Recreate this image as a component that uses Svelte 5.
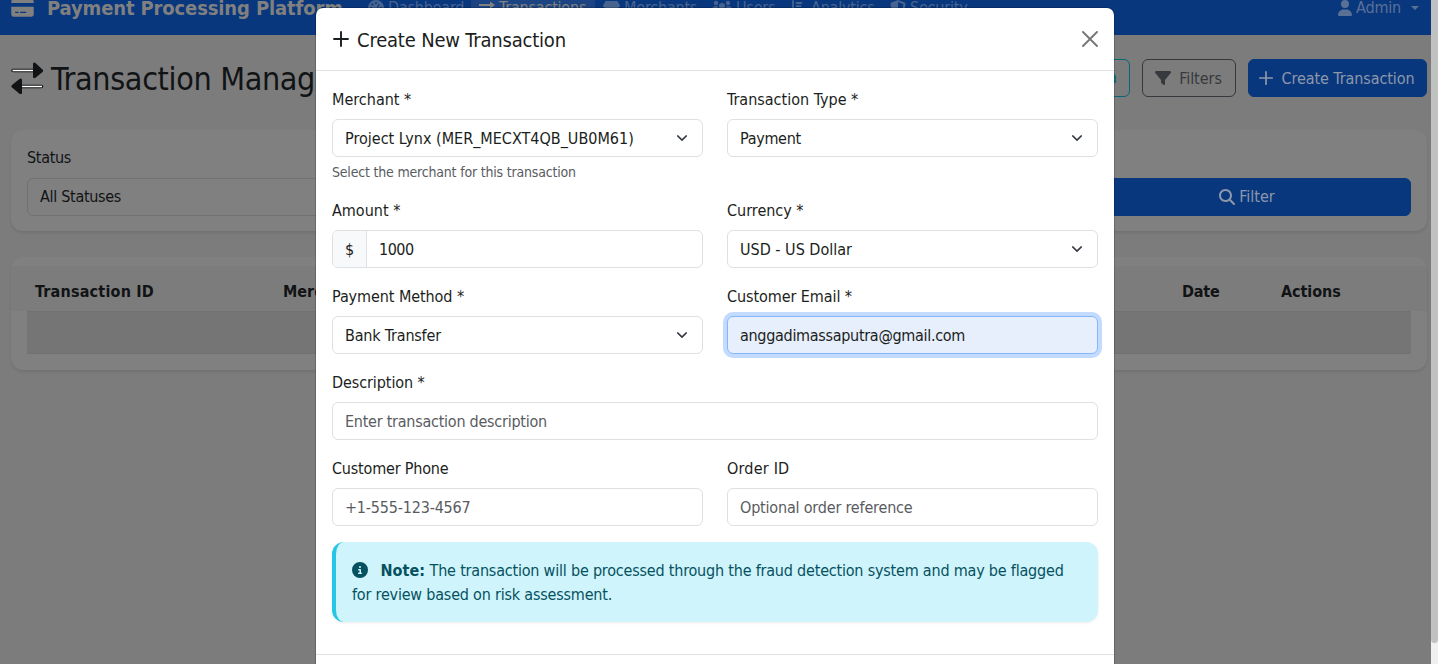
<script>
  const nav = [
    { label: 'Dashboard', icon: 'gauge' },
    { label: 'Transactions', icon: 'exchange', active: true },
    { label: 'Merchants', icon: 'store' },
    { label: 'Users', icon: 'users' },
    { label: 'Analytics', icon: 'chart' },
    { label: 'Security', icon: 'shield' }
  ];
</script>

{#snippet icon(name)}
  {#if name === 'gauge'}
    <svg width="16" height="16" viewBox="0 0 16 16"><path fill="currentColor" fill-rule="evenodd" d="M8 0a8 8 0 1 0 0 16A8 8 0 0 0 8 0zM8 2a1 1 0 1 1 0 2 1 1 0 0 1 0-2zM4.500 3.500a1 1 0 1 1 0 2 1 1 0 0 1 0-2zM3 7a1 1 0 1 1 0 2 1 1 0 0 1 0-2zM13 7a1 1 0 1 1 0 2 1 1 0 0 1 0-2zM10.500 4l1 .5-2 5.300A2 2 0 1 1 8.300 9.300z" /></svg>
  {:else if name === 'exchange'}
    <svg width="16" height="16" viewBox="0 0 16 16"><path fill="currentColor" d="M0 4h11V1.500L16 5l-5 3.500V6H0zM16 10H5V7.500L0 11l5 3.500V12h11z" /></svg>
  {:else if name === 'store'}
    <svg width="17" height="16" viewBox="0 0 17 16"><path fill="currentColor" d="M2.500 1h12L17 5.500C17 7 15.500 8 14 8H3C1.500 8 0 7 0 5.500zM1.500 9h2v2.500h10V9h2v5q0 1.500-1.500 1.500H3q-1.500 0-1.500-1.500z" /></svg>
  {:else if name === 'users'}
    <svg width="20" height="16" viewBox="0 0 20 16"><g fill="currentColor"><circle cx="4" cy="3" r="2.200" /><circle cx="16" cy="3" r="2.200" /><circle cx="10" cy="6" r="3" /><path d="M0 9.500C0 7.500 1.500 6.200 3 6.200h2.500C6 8 6.500 9 7.500 9.500zM20 9.500c0-2-1.500-3.300-3-3.300h-2.500c-.5 1.800-1 2.800-2 3.300zM4 15c0-3 2-4.500 4-4.500h4c2 0 4 1.500 4 4.500z" /></g></svg>
  {:else if name === 'chart'}
    <svg width="16" height="16" viewBox="0 0 16 16"><path fill="none" stroke="currentColor" stroke-width="1.800" stroke-linecap="round" d="M2 1v12h12M5.500 3h5M5.500 6.200h4M5.500 9.500h6.500" /></svg>
  {:else if name === 'shield'}
    <svg width="16" height="16" viewBox="0 0 16 16"><path fill="currentColor" fill-rule="evenodd" d="M8 0l6.500 2.500c.8.300 1 .8 1 1.500C15 10 12.500 14 8 16 3.500 14 1 10 .5 4c0-.7.200-1.200 1-1.500zM8 2v11.800c3.200-1.700 5-4.800 5.400-9.600z" /></svg>
  {/if}
{/snippet}

{#snippet plusIcon(size)}
  <svg width={size} height={size} viewBox="0 0 16 16"><path fill="none" stroke="currentColor" stroke-width="1.700" stroke-linecap="round" d="M8 1.800v12.400M1.800 8h12.400" /></svg>
{/snippet}

{#snippet chevron()}
  <svg width="16" height="12" viewBox="0 0 16 12"><path fill="none" stroke="#343a40" stroke-linecap="round" stroke-linejoin="round" stroke-width="1.500" d="m3.700 3.900 4.300 4.200 4.300-4.200" /></svg>
{/snippet}

<div class="screen">
  <div class="page">
    <header>
      <div class="bar">
        <div class="brand">
          <svg width="23" height="20" viewBox="0 0 576 512"><path fill="currentColor" d="M64 32C28.700 32 0 60.700 0 96v32H576V96c0-35.300-28.700-64-64-64H64zM576 224H0V416c0 35.300 28.700 64 64 64H512c35.300 0 64-28.700 64-64V224zM112 352h64c8.800 0 16 7.200 16 16s-7.200 16-16 16H112c-8.800 0-16-7.200-16-16s7.200-16 16-16zm112 16c0-8.800 7.200-16 16-16H368c8.800 0 16 7.200 16 16s-7.200 16-16 16H240c-8.800 0-16-7.200-16-16z" /></svg>
          <span>Payment Processing Platform</span>
        </div>
        <nav>
          {#each nav as item}
            <div class="link" class:active={item.active}>{@render icon(item.icon)}<span>{item.label}</span></div>
          {/each}
        </nav>
        <div class="admin">
          <svg width="14" height="16" viewBox="0 0 448 512"><path fill="currentColor" d="M224 256A128 128 0 1 0 224 0a128 128 0 1 0 0 256zm-45.700 48C79.800 304 0 383.800 0 482.300C0 498.700 13.300 512 29.700 512H418.300c16.400 0 29.700-13.300 29.700-29.700C448 383.800 368.200 304 269.700 304H178.300z" /></svg>
          <span class="s2">Admin</span>
          <i class="caret"></i>
        </div>
      </div>
    </header>

    <div class="heading">
      <svg width="33" height="32" viewBox="0 0 33 32">
        <path fill="#111315" d="M22 1.500q1-1.500 2.500-.5l7 6.500q1.300 1.300 0 2.600L24.500 15.800q-1.500 1-2.500-.5zM11 17.500q-1-1.500-2.500-.5L1 23q-1.300 1.300 0 2.600l7.500 6.200q1.500 1 2.500-.5z" />
        <path fill="none" stroke="#111315" stroke-width="3.600" stroke-linecap="round" d="M2 8.500h20M10 24.500h20.500" />
        <path stroke="#fff" stroke-width="1.600" d="M1.500 8.500H22M11 24.500h20" />
      </svg>
      <h1>Transaction Management</h1>
      <div class="actions">
        <div class="btn info">Refresh Data</div>
        <div class="btn outline">
          <svg width="16" height="16" viewBox="0 0 512 512"><path fill="currentColor" d="M3.900 54.900C10.500 40.900 24.500 32 40 32H472c15.500 0 29.500 8.900 36.100 22.900s4.600 30.500-5.200 42.500L320 320.900V448c0 12.100-6.800 23.200-17.700 28.600s-23.800 4.300-33.500-3l-64-48c-8.100-6-12.800-15.500-12.800-25.600V320.900L9 97.300C-.7 85.400-2.800 68.800 3.900 54.900z" /></svg>
          <span>Filters</span>
        </div>
        <div class="btn primary create">{@render plusIcon(16)}<span class="s1">Create Transaction</span></div>
      </div>
    </div>

    <section class="card filters">
      <div class="status">
        <div class="lab s3">Status</div>
        <div class="dimselect s3">All Statuses</div>
      </div>
      <div class="btn primary search">
        <svg width="16" height="16" viewBox="0 0 512 512"><path fill="currentColor" d="M416 208c0 45.900-14.900 88.300-40 122.700L502.600 457.400c12.500 12.500 12.500 32.800 0 45.300s-32.800 12.500-45.300 0L330.700 376C296.300 401.100 253.900 416 208 416 93.100 416 0 322.900 0 208S93.100 0 208 0 416 93.100 416 208zM208 352a144 144 0 1 0 0-288 144 144 0 1 0 0 288z" /></svg>
        <span>Filter</span>
      </div>
    </section>

    <section class="card table">
      <div class="thead"><b class="wide">Transaction ID</b><b>Merchant</b><b class="s2">Date</b><b class="s1">Actions</b></div>
      <div class="row"></div>
    </section>
  </div>

  <div class="scroll"><div class="thumb"></div></div>

  <div class="modal">
    <div class="mhead">
      {@render plusIcon(18)}
      <h5 class="s2">Create New Transaction</h5>
      <svg class="close" width="16" height="16" viewBox="0 0 16 16"><path fill="none" stroke="#777" stroke-width="1.900" stroke-linecap="round" d="M1 1l14 14M15 1L1 15" /></svg>
    </div>
    <div class="mbody">
      <div class="cols">
        <div class="field">
          <div class="label">Merchant *</div>
          <div class="input"><span>Project Lynx (MER_MECXT4QB_UB0M61)</span>{@render chevron()}</div>
          <div class="hint s2">Select the merchant for this transaction</div>
        </div>
        <div class="field">
          <div class="label">Transaction Type *</div>
          <div class="input"><span class="s3">Payment</span>{@render chevron()}</div>
        </div>
      </div>
      <div class="cols">
        <div class="field">
          <div class="label">Amount *</div>
          <div class="input group"><div class="addon">$</div><span class="s4">1000</span></div>
        </div>
        <div class="field">
          <div class="label">Currency *</div>
          <div class="input"><span>USD - US Dollar</span>{@render chevron()}</div>
        </div>
      </div>
      <div class="cols">
        <div class="field">
          <div class="label s1">Payment Method *</div>
          <div class="input"><span class="s2">Bank Transfer</span>{@render chevron()}</div>
        </div>
        <div class="field">
          <div class="label s1">Customer Email *</div>
          <div class="input focus"><span class="s3">anggadimassaputra@gmail.com</span></div>
        </div>
      </div>
      <div class="field">
        <div class="label s1">Description *</div>
        <div class="input ph"><span class="s25">Enter transaction description</span></div>
      </div>
      <div class="cols">
        <div class="field">
          <div class="label s2">Customer Phone</div>
          <div class="input ph"><span class="s2">+1-555-123-4567</span></div>
        </div>
        <div class="field">
          <div class="label wide">Order ID</div>
          <div class="input ph"><span class="s2">Optional order reference</span></div>
        </div>
      </div>
      <div class="note">
        <svg width="16" height="16" viewBox="0 0 512 512"><path fill="currentColor" d="M256 512A256 256 0 1 0 256 0a256 256 0 1 0 0 512zM216 336h24V272H216c-13.300 0-24-10.700-24-24s10.700-24 24-24h48c13.300 0 24 10.700 24 24v88h8c13.300 0 24 10.700 24 24s-10.700 24-24 24H216c-13.300 0-24-10.700-24-24s10.700-24 24-24zm40-208a32 32 0 1 1 0 64 32 32 0 1 1 0-64z" /></svg>
        <b>Note:</b> The transaction will be processed through the fraud detection system and may be flagged<br />for review based on risk assessment.
      </div>
    </div>
    <div class="mfoot"></div>
  </div>
</div>

<style>
  :global(body) { margin: 0; overflow: hidden; }
  .screen {
    position: relative; display: flex; width: 1438px; height: 664px; overflow: hidden;
    background: #7c7c7c; color: #111315;
    font: 16px/24px Tahoma, "DejaVu Sans Condensed", "DejaVu Sans", sans-serif; font-stretch: condensed;
  }
  .screen * { box-sizing: border-box; }
  svg { flex: none; display: block; }
  span { white-space: nowrap; }
  .wide { letter-spacing: .2px; }
  .s1 { letter-spacing: -.08px; }
  .s2 { letter-spacing: -.19px; }
  .s25 { letter-spacing: -.25px; }
  .s3 { letter-spacing: -.3px; }
  .s4 { letter-spacing: -.5px; }
  .page { width: 1431px; }
  header { height: 35px; overflow: hidden; background: #08377e; }
  .bar { display: flex; align-items: center; height: 54px; margin-top: -19px; color: #808080; }
  .brand { display: flex; align-items: center; gap: 13px; width: 349px; padding-left: 11px; font-size: 20px; font-weight: 700; letter-spacing: -.13px; }
  nav { display: grid; grid-template-columns: 111px 124px 109px 79px 99px 92px; margin-left: 11px; color: #47638f; letter-spacing: -.2px; }
  .link { display: flex; align-items: center; gap: 4px; padding: 8px 0 8px 8px; height: 40px; border-radius: 6px; }
  .link.active { background: #1d4482; color: #808080; }
  .admin { display: flex; align-items: center; margin-left: auto; padding-right: 12px; color: #5a7196; }
  .admin span { margin: 0 10px 0 4px; }
  .caret { border: 4.500px solid transparent; border-top-color: currentColor; border-bottom: 0; }
  .heading { display: flex; align-items: center; height: 38px; margin: 24px 4px 33px 11px; }
  h1 { margin: 0 0 0 7px; padding-top: 2px; font-size: 32px; line-height: 38px; font-weight: 400; letter-spacing: -.35px; white-space: nowrap; }
  .actions { display: flex; gap: 12px; margin-left: auto; }
  .btn { display: flex; align-items: center; justify-content: center; gap: 8px; height: 38px; border: 1px solid; border-radius: 6px; white-space: nowrap; }
  .info { width: 126px; justify-content: flex-end; padding-right: 12px; color: #066578; }
  .outline { width: 94px; padding-right: 1px; color: #36393d; letter-spacing: -.05px; }
  .outline span, .create span { padding-top: 1px; }
  .primary { width: 179px; border-color: #08377e; background: #08377e; color: #8d98aa; }
  .create { gap: 7px; padding-right: 2px; }
  .card { margin: 0 4px 26px 11px; border-radius: 12px; background: #808080; box-shadow: 0 2px 3px rgba(0, 0, 0, .09); }
  .filters { display: flex; justify-content: space-between; height: 101px; padding: 16px; }
  .status { width: 327px; }
  .lab { margin-bottom: 8px; }
  .dimselect { height: 38px; border: 1px solid #707172; border-radius: 6px; padding: 6px 12px; }
  .search { width: 328px; margin-top: 32px; gap: 4px; }
  .table { height: 113px; padding: 9px 0 0; overflow: hidden; }
  .thead { display: grid; grid-template-columns: 248px 899px 99px auto; height: 45px; padding: 14px 24px 0; background: #7c7c7c; }
  .row { height: 43px; margin: 0 16px; border: solid #6f7173; border-width: 1px 0; background: #757575; }
  .scroll { width: 7px; height: 664px; background: #eff1f1; }
  .thumb { height: 643px; background: #c0c1c1; border-radius: 0 0 4px 4px; }
  .modal { position: absolute; left: 315px; top: 7px; width: 800px; height: 720px; border: 1px solid rgba(0, 0, 0, .18); border-radius: 8px; background: #fff; background-clip: padding-box; color: #1b1e21; }
  .mhead { display: flex; align-items: center; height: 63px; padding: 0 16px; border-bottom: 1px solid #dfe0e1; }
  h5 { margin: 0 0 0 7px; padding-top: 2px; font-size: 20px; line-height: 30px; font-weight: 400; }
  .close { margin-left: auto; }
  .mbody { padding: 16px; }
  .cols { display: grid; grid-template-columns: 371px 371px; gap: 24px; }
  .field { margin-bottom: 16px; }
  .label { margin-bottom: 6px; line-height: 26px; }
  .input { display: flex; align-items: center; justify-content: space-between; height: 38px; padding: 0 12px; border: 1px solid #dfe0e1; border-radius: 6px; background: #fff; }
  .input span { padding-top: 2px; }
  .group { justify-content: flex-start; padding-left: 0; overflow: hidden; }
  .addon { width: 34px; height: 36px; padding: 7px 0 0 12px; margin-right: 12px; border-right: 1px solid #dfe0e1; background: #f8f9fa; }
  .hint { padding-top: 5px; margin-bottom: -1px; font-size: 14px; line-height: 21px; color: #595c5f; }
  .focus { border-color: #86b7fe; background: #e7eefc; box-shadow: 0 0 0 4px #c2dbfe; }
  .ph { color: #595c5f; }
  .note { height: 80px; margin-bottom: 16px; padding: 17px 16px 15px; border-left: 4px solid #25c6e6; border-radius: 12px; background: #cff4fc; color: #055160; box-shadow: 0 1px 3px rgba(0, 0, 0, .08); letter-spacing: -.2px; white-space: nowrap; }
  .note b { letter-spacing: .1px; }
  .note svg { display: inline-block; vertical-align: -2px; margin-right: 8px; }
  .mfoot { border-top: 1px solid #dfe0e1; }
</style>
